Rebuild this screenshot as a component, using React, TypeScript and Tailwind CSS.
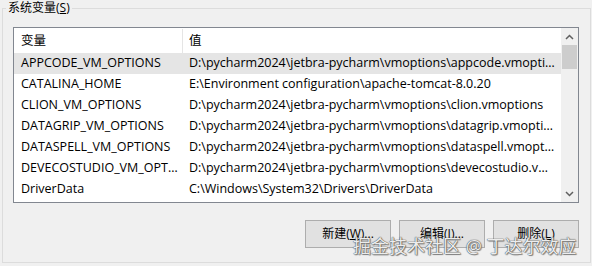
import React from 'react';

const rows = [
  { name: 'APPCODE_VM_OPTIONS', value: 'D:\\pycharm2024\\jetbra-pycharm\\vmoptions\\appcode.vmoptions', selected: true },
  { name: 'CATALINA_HOME', value: 'E:\\Environment configuration\\apache-tomcat-8.0.20' },
  { name: 'CLION_VM_OPTIONS', value: 'D:\\pycharm2024\\jetbra-pycharm\\vmoptions\\clion.vmoptions' },
  { name: 'DATAGRIP_VM_OPTIONS', value: 'D:\\pycharm2024\\jetbra-pycharm\\vmoptions\\datagrip.vmoptions' },
  { name: 'DATASPELL_VM_OPTIONS', value: 'D:\\pycharm2024\\jetbra-pycharm\\vmoptions\\dataspell.vmoptions' },
  { name: 'DEVECOSTUDIO_VM_OPTIONS', value: 'D:\\pycharm2024\\jetbra-pycharm\\vmoptions\\devecostudio.vmoptions' },
  { name: 'DriverData', value: 'C:\\Windows\\System32\\Drivers\\DriverData' },
];

const font = { fontFamily: '"Open Sans", "Noto Sans CJK SC", sans-serif' };

function WinButton({ children }: { children: React.ReactNode }) {
  return (
    <button className="h-[28px] w-[86px] border border-[#adadad] bg-[#e1e1e1] text-[12px] text-black">
      {children}
    </button>
  );
}

export default function App() {
  return (
    <div className="relative h-[266px] w-[592px] overflow-hidden bg-[#f0f0f0] text-[12.5px] text-black" style={font}>
      {/* 分组框 */}
      <div className="absolute left-[2px] top-[8px] h-[255px] w-[589px] border border-[#dcdcdc]" />
      <div className="relative flex h-full flex-col pl-[13px] pr-[13px]">
        <div className="absolute left-[6px] top-[0px] bg-[#f0f0f0] px-[2px] text-[12px] leading-[16px]">系统变量(<span className="underline">S</span>)</div>

        {/* 列表 */}
        <div className="mt-[27px] flex h-[176px] w-[566px] border border-[#828790] bg-white">
          <div className="flex min-w-0 flex-1 flex-col pt-[1px]">
            <div className="flex h-[24px] shrink-0 items-center">
              <div className="flex h-full w-[169px] items-center border-r border-[#e5e5e5] pl-[7px]">变量</div>
              <div className="pl-[6px]">值</div>
            </div>
            {rows.map((r) => (
              <div key={r.name} className={`flex h-[21px] shrink-0 items-center ${r.selected ? 'bg-[#e5e5e5]' : ''}`}>
                <div className="w-[169px] truncate pl-[7px] pr-[5px]">{r.name}</div>
                <div className="min-w-0 flex-1 truncate pl-[6px] pr-[6px]">{r.value}</div>
              </div>
            ))}
          </div>
          {/* 滚动条 */}
          <div className="flex w-[17px] shrink-0 flex-col bg-[#f0f0f0]">
            <div className="flex h-[17px] items-center justify-center">
              <svg width="9" height="6" viewBox="0 0 9 6"><path d="M1 5 L4.5 1.5 L8 5" fill="none" stroke="#606060" strokeWidth="1.5" /></svg>
            </div>
            <div className="mx-[1px] h-[24px] bg-[#cdcdcd]" />
            <div className="flex-1" />
            <div className="flex h-[17px] items-center justify-center">
              <svg width="9" height="6" viewBox="0 0 9 6"><path d="M1 1 L4.5 4.5 L8 1" fill="none" stroke="#606060" strokeWidth="1.5" /></svg>
            </div>
          </div>
        </div>

        {/* 按钮 */}
        <div className="mt-[17px] flex justify-end gap-[8px]">
          <WinButton>新建(<span className="underline">W</span>)...</WinButton>
          <WinButton>编辑(<span className="underline">I</span>)...</WinButton>
          <WinButton>删除(<span className="underline">L</span>)</WinButton>
        </div>
      </div>

      {/* 水印 */}
      <div
        className="absolute left-[353px] top-[234px] whitespace-nowrap text-[18px] leading-[24px] text-white/90"
        style={{ textShadow: '0 0 1px #444, 0 0 1px #444, 1px 1px 1px #888' }}
      >
        掘金技术社区 @ 丁达尔效应
      </div>
    </div>
  );
}
